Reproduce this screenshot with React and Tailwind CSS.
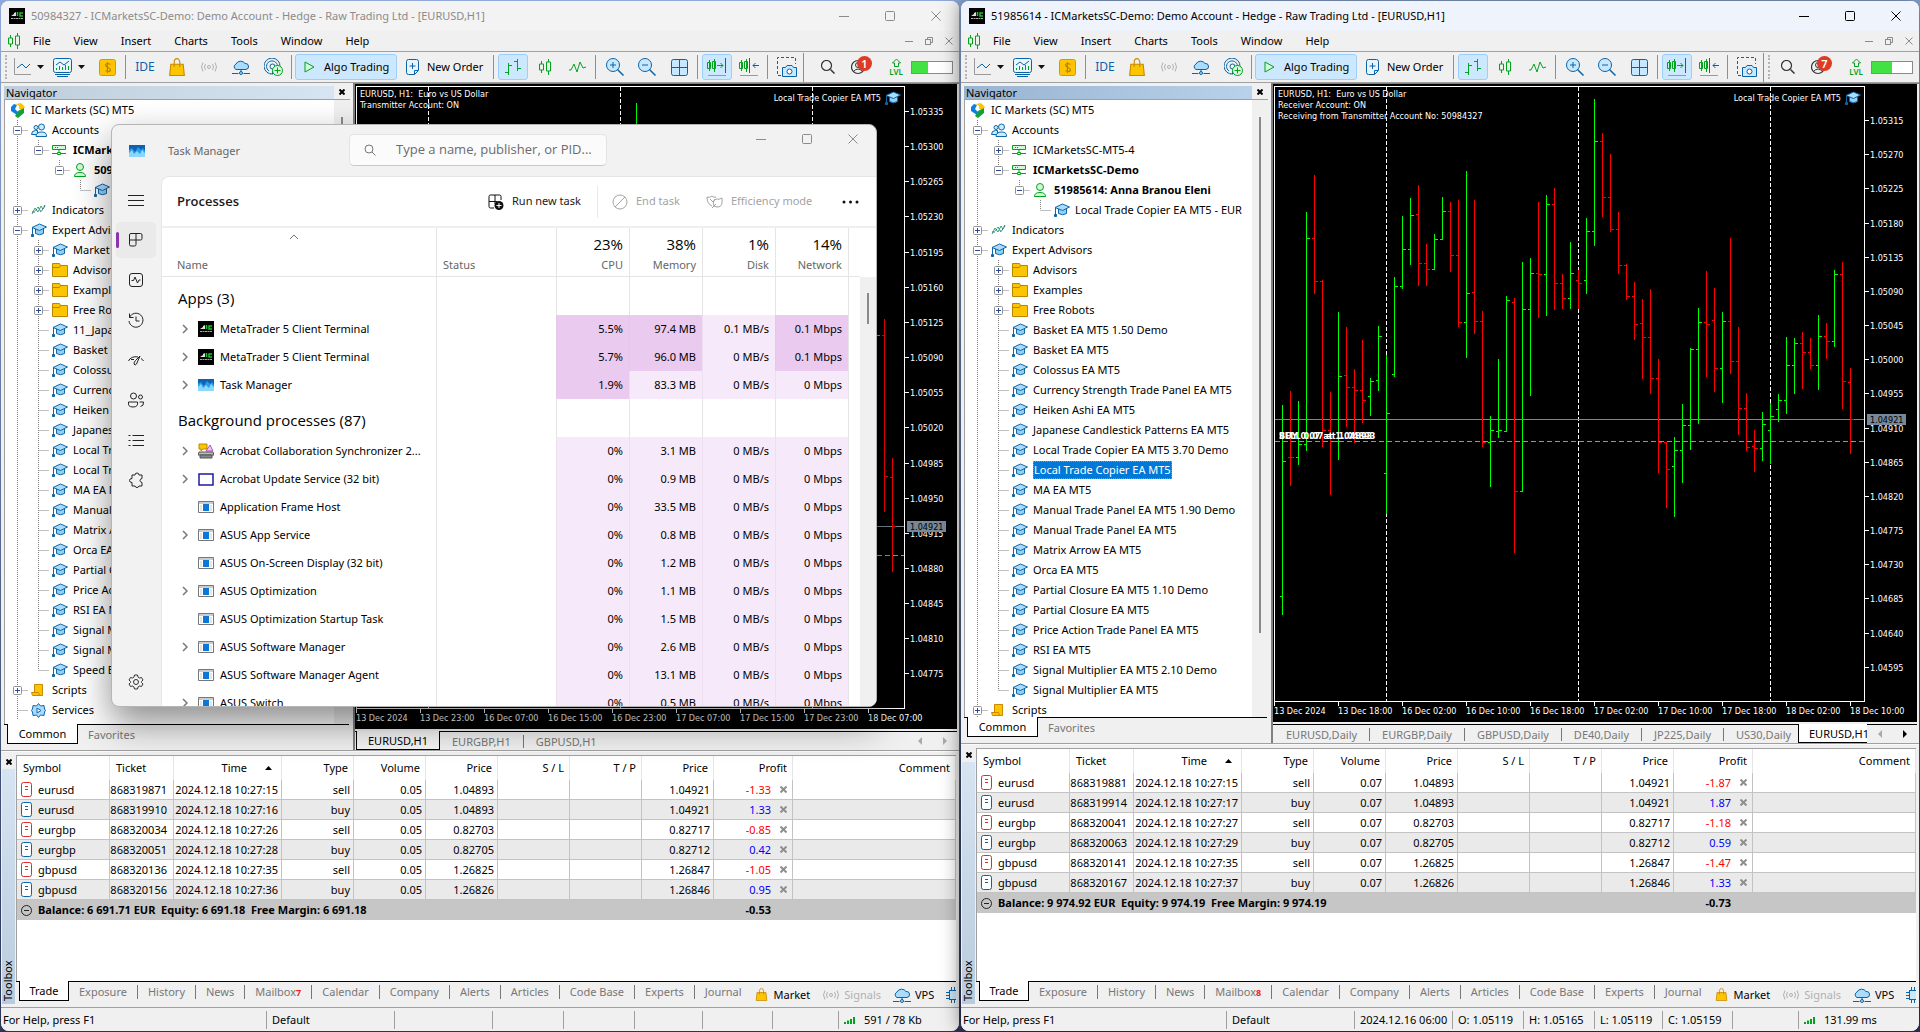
import React from 'react';

const UP = '#00ff00';
const DOWN = '#ff0000';

// [high, low, open, close, up], three steps per pixel from the top of the chart
const bars = [
    [975, 1605, 1549, 1143, 1], [933, 1217, 1132, 1132, 0], [963, 1154, 1132, 1093, 1],
    [396, 1112, 1093, 475, 1], [285, 641, 475, 604, 0], [600, 1100, 604, 1051, 0],
    [936, 1244, 1051, 1084, 0], [696, 1139, 1084, 889, 1], [741, 1040, 886, 922, 0],
    [867, 1088, 922, 931, 0], [780, 1028, 931, 961, 0], [894, 1007, 948, 904, 1],
    [738, 932, 901, 769, 1], [825, 1302, 1180, 1000, 1], [591, 892, 883, 619, 1],
    [408, 628, 619, 508, 1], [354, 554, 508, 406, 1], [315, 617, 403, 550, 0],
    [492, 617, 550, 568, 0], [462, 568, 568, 478, 1], [351, 480, 478, 394, 1],
    [366, 575, 394, 526, 0], [360, 740, 526, 727, 0], [273, 833, 727, 640, 1],
    [360, 761, 637, 724, 0], [693, 1100, 724, 1087, 0], [1008, 1220, 1087, 1051, 1],
    [837, 1073, 1054, 1051, 1], [648, 1056, 1054, 661, 1], [654, 1418, 667, 1234, 0],
    [546, 1236, 1234, 688, 1], [534, 947, 688, 580, 1], [366, 713, 580, 583, 0],
    [345, 708, 583, 373, 1], [324, 689, 373, 610, 0], [582, 686, 610, 655, 0],
    [486, 686, 655, 580, 1], [570, 686, 601, 610, 0], [414, 641, 601, 454, 1],
    [57, 497, 454, 184, 1], [159, 410, 184, 352, 0], [222, 455, 352, 448, 0],
    [396, 581, 448, 556, 0], [552, 659, 556, 649, 0], [606, 779, 649, 733, 0],
    [657, 896, 730, 772, 0], [627, 941, 772, 895, 0], [837, 1178, 895, 1087, 0],
    [1085, 1283, 1087, 1168, 0], [1071, 1310, 1159, 1111, 1], [972, 1208, 1111, 1036, 1],
    [804, 1109, 1036, 808, 1], [684, 1032, 808, 727, 1], [573, 890, 727, 733, 0],
    [624, 935, 721, 865, 0], [696, 968, 865, 724, 1], [474, 881, 724, 844, 0],
    [741, 1065, 844, 985, 0], [939, 1112, 985, 1102, 0], [1050, 1175, 1099, 1105, 0],
    [996, 1142, 1105, 1033, 1], [969, 1151, 1051, 1009, 1], [942, 1025, 988, 961, 1],
    [771, 1001, 961, 856, 1], [774, 941, 856, 790, 1], [756, 926, 790, 817, 0],
    [774, 866, 817, 856, 0], [705, 929, 856, 769, 1], [729, 836, 769, 784, 0],
    [570, 800, 784, 583, 1], [546, 986, 583, 904, 0], [864, 1121, 907, 1018, 0],
].map(([high, low, open, close, up], i) => ({ x: 9 + i * 8, high, low, open, close, up }));

const leftBars = [
    { x: 281, high: 69, low: 700, open: 500, close: 300, up: 1 },
    { x: 521, high: 747, low: 1053, open: 1000, close: 765, up: 1 },
    { x: 529, high: 717, low: 1295, open: 765, close: 1189, up: 0 },
    { x: 537, high: 1134, low: 1476, open: 1192, close: 1338, up: 0 },
];

const experts = [
    'Basket EA MT5 1.50 Demo', 'Basket EA MT5', 'Colossus EA MT5', 'Currency Strength Trade Panel EA MT5',
    'Heiken Ashi EA MT5', 'Japanese Candlestick Patterns EA MT5', 'Local Trade Copier EA MT5 3.70 Demo',
    'Local Trade Copier EA MT5', 'MA EA MT5', 'Manual Trade Panel EA MT5 1.90 Demo', 'Manual Trade Panel EA MT5',
    'Matrix Arrow EA MT5', 'Orca EA MT5', 'Partial Closure EA MT5 1.10 Demo', 'Partial Closure EA MT5',
    'Price Action Trade Panel EA MT5', 'RSI EA MT5', 'Signal Multiplier EA MT5 2.10 Demo', 'Signal Multiplier EA MT5',
];

const leftExperts = [
    '11_Japanese Patterns', 'Basket EA MT5', 'Colossus EA MT5', 'Currency Strength EA', 'Heiken Ashi EA MT5',
    'Japanese Patterns', 'Local Trade Copier', 'Local Trade Copier', 'MA EA MT5', 'Manual Trade Panel',
    'Matrix Arrow EA MT5', 'Orca EA MT5', 'Partial Closure EA', 'Price Action Panel', 'RSI EA MT5',
    'Signal Multiplier', 'Signal Multiplier',
];

// lines: one letter per indent cell. i = line, t = branch, l = last branch, p/m = expander, e/n = last expander, . = empty
const rightTree = [
    { lines: '', icon: 'logo', text: 'IC Markets (SC) MT5' },
    { lines: 'm', icon: 'users', text: 'Accounts' },
    { lines: 'ip', icon: 'server', text: 'ICMarketsSC-MT5-4' },
    { lines: 'in', icon: 'server', text: 'ICMarketsSC-Demo', bold: true },
    { lines: 'i.n', icon: 'user', text: '51985614: Anna Branou Eleni', bold: true },
    { lines: 'i..l', icon: 'cap', text: 'Local Trade Copier EA MT5 - EUR' },
    { lines: 'p', icon: 'indicator', text: 'Indicators' },
    { lines: 'm', icon: 'cap', text: 'Expert Advisors' },
    { lines: 'ip', icon: 'folder', text: 'Advisors' },
    { lines: 'ip', icon: 'folder', text: 'Examples' },
    { lines: 'ip', icon: 'folder', text: 'Free Robots' },
    ...experts.map((text, i) => ({
        lines: i === experts.length - 1 ? 'il' : 'it',
        icon: 'cap',
        text,
        selected: text === 'Local Trade Copier EA MT5',
    })),
    { lines: 'p', icon: 'script', text: 'Scripts' },
];

const leftTree = [
    { lines: '', icon: 'logo', text: 'IC Markets (SC) MT5' },
    { lines: 'm', icon: 'users', text: 'Accounts' },
    { lines: 'in', icon: 'server', text: 'ICMarketsSC-Demo', bold: true },
    { lines: 'i.n', icon: 'user', text: '50984327', bold: true },
    { lines: 'i..l', icon: 'cap', text: 'Local Trade Copier' },
    { lines: 'p', icon: 'indicator', text: 'Indicators' },
    { lines: 'm', icon: 'cap', text: 'Expert Advisors' },
    { lines: 'ip', icon: 'cap', text: 'Market' },
    { lines: 'ip', icon: 'folder', text: 'Advisors' },
    { lines: 'ip', icon: 'folder', text: 'Examples' },
    { lines: 'ip', icon: 'folder', text: 'Free Robots' },
    ...leftExperts.map((text) => ({ lines: 'it', icon: 'cap', text })),
    { lines: 'il', icon: 'cap', text: 'Speed EA MT5' },
    { lines: 'p', icon: 'script', text: 'Scripts' },
    { lines: 't', icon: 'gear', text: 'Services' },
];

const leftTerminal = {
    title: '50984327 - ICMarketsSC-Demo: Demo Account - Hedge - Raw Trading Ltd - [EURUSD,H1]',
    active: false,
    tree: leftTree,
    notices: 1,
    charge: 16,
    balance: 'Balance: 6 691.71 EUR  Equity: 6 691.18  Free Margin: 6 691.18',
    total: '-0.53',
    mail: 7,
    status: ['', '', '', '', '', ''],
    traffic: '591 / 78 Kb',
    chart: {
        lines: ['EURUSD, H1:  Euro vs US Dollar', 'Transmitter Account: ON'],
        bars: leftBars,
        axisX: 549,
        bottom: 624,
        first: 5335,
        step: 35,
        firstY: 27,
        stepY: 35.15,
        days: [73, 265, 457],
        priceY: 442,
        orderY: 471,
        times: ['13 Dec 2024', '13 Dec 23:00', '16 Dec 07:00', '16 Dec 15:00', '16 Dec 23:00', '17 Dec 07:00', '17 Dec 15:00', '17 Dec 23:00', '18 Dec 07:00'],
    },
    trades: [
        ['eurusd', '868319871', '2024.12.18 10:27:15', 'sell', '0.05', '1.04893', '1.04921', '-1.33'],
        ['eurusd', '868319910', '2024.12.18 10:27:16', 'buy', '0.05', '1.04893', '1.04921', '1.33'],
        ['eurgbp', '868320034', '2024.12.18 10:27:26', 'sell', '0.05', '0.82703', '0.82717', '-0.85'],
        ['eurgbp', '868320051', '2024.12.18 10:27:28', 'buy', '0.05', '0.82705', '0.82712', '0.42'],
        ['gbpusd', '868320136', '2024.12.18 10:27:35', 'sell', '0.05', '1.26825', '1.26847', '-1.05'],
        ['gbpusd', '868320156', '2024.12.18 10:27:36', 'buy', '0.05', '1.26826', '1.26846', '0.95'],
    ],
};

const rightTerminal = {
    title: '51985614 - ICMarketsSC-Demo: Demo Account - Hedge - Raw Trading Ltd - [EURUSD,H1]',
    active: true,
    tree: rightTree,
    notices: 7,
    charge: 20,
    balance: 'Balance: 9 974.92 EUR  Equity: 9 974.19  Free Margin: 9 974.19',
    total: '-0.73',
    mail: 8,
    status: ['2024.12.16 06:00', 'O: 1.05119', 'H: 1.05165', 'L: 1.05119', 'C: 1.05159', ''],
    traffic: '131.99 ms',
    chart: {
        lines: ['EURUSD, H1:  Euro vs US Dollar', 'Receiver Account: ON', 'Receiving from Transmitter Account No: 50984327'],
        bars,
        axisX: 591,
        bottom: 617,
        first: 5315,
        step: 45,
        firstY: 36,
        stepY: 34.17,
        days: [113, 305, 497],
        priceY: 335,
        orderY: 357,
        orders: ['BUY 0.07 at 1.04893', 'SELL 0.07 at 1.04893'],
        times: ['13 Dec 2024', '13 Dec 18:00', '16 Dec 02:00', '16 Dec 10:00', '16 Dec 18:00', '17 Dec 02:00', '17 Dec 10:00', '17 Dec 18:00', '18 Dec 02:00', '18 Dec 10:00'],
    },
    trades: [
        ['eurusd', '868319881', '2024.12.18 10:27:15', 'sell', '0.07', '1.04893', '1.04921', '-1.87'],
        ['eurusd', '868319914', '2024.12.18 10:27:17', 'buy', '0.07', '1.04893', '1.04921', '1.87'],
        ['eurgbp', '868320041', '2024.12.18 10:27:27', 'sell', '0.07', '0.82703', '0.82717', '-1.18'],
        ['eurgbp', '868320063', '2024.12.18 10:27:29', 'buy', '0.07', '0.82705', '0.82712', '0.59'],
        ['gbpusd', '868320141', '2024.12.18 10:27:35', 'sell', '0.07', '1.26825', '1.26847', '-1.47'],
        ['gbpusd', '868320167', '2024.12.18 10:27:37', 'buy', '0.07', '1.26826', '1.26846', '1.33'],
    ],
};

const apps = [
    { name: 'MetaTrader 5 Client Terminal', icon: 'ic', open: true, values: ['5.5%', '97.4 MB', '0.1 MB/s', '0.1 Mbps'], heat: [1, 1, 0, 1] },
    { name: 'MetaTrader 5 Client Terminal', icon: 'ic', open: true, values: ['5.7%', '96.0 MB', '0 MB/s', '0.1 Mbps'], heat: [1, 1, 0, 1] },
    { name: 'Task Manager', icon: 'tm', open: true, values: ['1.9%', '83.3 MB', '0 MB/s', '0 Mbps'], heat: [1, 0, 0, 0] },
];

const background = [
    ['Acrobat Collaboration Synchronizer 2...', '3.1 MB', 'sync', true],
    ['Acrobat Update Service (32 bit)', '0.9 MB', 'blank', true],
    ['Application Frame Host', '33.5 MB', 'app', false],
    ['ASUS App Service', '0.8 MB', 'app', true],
    ['ASUS On-Screen Display (32 bit)', '1.2 MB', 'app', false],
    ['ASUS Optimization', '1.1 MB', 'app', true],
    ['ASUS Optimization Startup Task', '1.5 MB', 'app', false],
    ['ASUS Software Manager', '2.6 MB', 'app', true],
    ['ASUS Software Manager Agent', '13.1 MB', 'app', false],
    ['ASUS Switch', '0.5 MB', 'app', true],
].map(([name, memory, icon, open]) => ({ name, icon, open, values: ['0%', memory, '0 MB/s', '0 Mbps'], heat: [0, 0, 0, 0] }));

const Svg = ({ w = 18, h = 18, color = 'none', children }) => (
    <svg width={w} height={h} viewBox={`0 0 ${w} ${h}`} fill="none" stroke={color} className="shrink-0" aria-hidden="true">
        {children}
    </svg>
);

const IcLogo = () => (
    <Svg w={16} h={16}>
        <rect width="16" height="16" fill="#000" />
        <path d="M2 8l3-2v2zM5 8V5l2-1v4z" fill="#ddd" />
        <path d="M8.500 4v4M14 5h-3v3h3" stroke="#19c52b" strokeWidth="1.500" />
        <path d="M2 10.500h12" stroke="#aaa" strokeDasharray="2 .5" />
    </Svg>
);

const TaskLogo = () => (
    <Svg w={16} h={12}>
        <rect width="16" height="12" fill="#0d62b4" />
        <path d="M0 5l3-2 3 4 3-5 3 3 2-2 2 3v6H0z" fill="#2b9be8" />
        <path d="M0 8l3-3 2 4 3-3 3 3 2-4 3 3v4H0z" fill="#8ad7fb" />
    </Svg>
);

const Candles = () => (
    <Svg w={14} h={16} color="#00a31b">
        <path d="M3.500 2v3M3.500 11v3M10.500 0v3M10.500 12v4" />
        <path d="M1.500 5h4v6h-4zM8.500 3h4v9h-4z" />
    </Svg>
);

const Bag = ({ size = 16 }) => (
    <svg width={size} height={size} viewBox="0 0 16 16" className="shrink-0" fill="none" aria-hidden="true">
        <path d="M2.500 5.500h11l1 10h-13z" fill="#fdc500" stroke="#c98a00" />
        <path d="M5.500 8V4a2.500 3.500 0 0 1 5 0v4" stroke="#c98a00" />
    </svg>
);

const Signal = ({ color = '#b0b0b0' }) => (
    <Svg w={18} h={14} color={color}>
        <circle cx="9" cy="7" r="1.500" />
        <path d="M5.500 4q-2 3 0 6M3 2.500q-3 4.500 0 9M12.500 4q2 3 0 6M15 2.500q3 4.500 0 9" />
    </Svg>
);

const Cloud = () => (
    <Svg w={18} h={16} color="#0b63a5">
        <path d="M4 10.500a3 3 0 0 1 0-5.500 5 4.500 0 0 1 9-.5 3 3 0 0 1 1 6z" fill="#a9dcff" />
        <path d="M9 10.500v3M0 14.500h6.500M11.500 14.500H18" />
        <circle cx="9" cy="14" r="1.500" fill="#a9dcff" />
    </Svg>
);

const Cap = () => (
    <Svg w={16} h={14} color="#0f66a6">
        <path d="M4.500 6v4.500q4 2.500 8 0V6" fill="#8fd0f7" />
        <path d="M1 4.500L8.500 1 15.500 4 8.500 7.500z" fill="#a9dcff" />
        <path d="M1.500 5v6" />
        <path d="M.5 11.500h2v2h-2z" fill="#0f66a6" />
    </Svg>
);

const treeIcons = {
    logo: (
        <Svg w={15} h={15}>
            <path d="M4 1l3 1-2 4 3 3-1 3-6-4 0-4z" fill="#0e7fe0" />
            <path d="M6 1l5-1 4 4-3 3-3-1V3z" fill="#fdc500" />
            <path d="M8 8l6-3v5l-6 5-3-2z" fill="#12a03c" />
        </Svg>
    ),
    users: (
        <Svg w={16} h={14} color="#0f66a6">
            <circle cx="5" cy="4.500" r="2" fill="#cdeaff" />
            <path d="M.5 11.500q0-4 4-4h2v4z" fill="#cdeaff" />
            <circle cx="10.500" cy="4" r="3" fill="#cdeaff" />
            <path d="M5 13.500q0-4.500 5.500-4.500t5 4.500z" fill="#cdeaff" />
        </Svg>
    ),
    server: (
        <Svg w={14} h={12} color="#00a31b">
            <path d="M.5 1.500h13v4H.5z" fill="#d5f7d9" />
            <path d="M3 3.500h1M5 3.500h1M7 5.500v3M0 9.500h5M9 9.500h5M5.500 8.500h3v2h-3z" />
        </Svg>
    ),
    user: (
        <Svg w={14} h={14} color="#00a31b">
            <circle cx="7" cy="4" r="3.500" fill="#d5f7d9" />
            <path d="M1.500 13.500q0-4 5.500-4t5.500 4z" fill="#d5f7d9" />
        </Svg>
    ),
    cap: <Cap />,
    indicator: (
        <Svg w={15} h={12}>
            <path d="M1 10l3-6 3 4 3-6 2 3 2-3" stroke="#2fae4a" />
            <path d="M1 8l3 0 3-5 3 5 4-7" stroke="#2f6ca6" strokeDasharray="3 1" />
        </Svg>
    ),
    folder: (
        <Svg w={16} h={14} color="#b98600">
            <path d="M.5 3V.5h7l1 2h7v11H.5z" fill="#fdc500" />
            <path d="M.5 4.500h7l1-2" />
        </Svg>
    ),
    script: (
        <Svg w={14} h={12} color="#c98a00">
            <path d="M3.500.5h8v11h-8z" fill="#fdc500" />
            <path d="M.5 8.500h7l1 3h-7z" fill="#fdc500" />
        </Svg>
    ),
    gear: (
        <Svg w={15} h={15} color="#0f66a6">
            <path d="M7.500.5l2 2.500 3.500-.5.5 3.500 1 1.500-1 1.500-.5 3.500-3.500-.5-2 2.500-2-2.500-3.500.5L1.500 9l-1-1.500 1-1.500L2 2.500l3.500.5z" fill="#a9dcff" />
            <path d="M6 5l4 2.500L6 10z" fill="#fff" />
        </Svg>
    ),
};

const processIcons = {
    ic: <IcLogo />,
    tm: <TaskLogo />,
    sync: (
        <Svg w={16} h={16}>
            <path d="M1 1h8v5H5L3 8V6H1z" fill="#ffc400" stroke="#b48900" />
            <path d="M8 8l4-6 3 6z" fill="#efc7f5" stroke="#b050c0" />
            <path d="M1 9h14l1 3H0z" fill="#bbb" stroke="#555" />
            <path d="M2 12h12v3H2z" fill="#888" stroke="#555" />
        </Svg>
    ),
    blank: (
        <Svg w={16} h={13}>
            <path d="M1 1h14v11H1z" fill="#fff" stroke="#1c1c9c" strokeWidth="1.500" />
        </Svg>
    ),
    app: (
        <Svg w={16} h={12}>
            <path d="M.5.5h15v11H.5z" fill="#fff" stroke="#777" />
            <path d="M1 2h14" stroke="#999" />
            <path d="M2.500 5h1M2.500 7h1M2.500 9h1M12.500 5h1M12.500 7h1M12.500 9h1" stroke="#999" />
            <path d="M5 3h6v7H5z" fill="#0a78d4" />
        </Svg>
    ),
};

const CloseX = ({ size = 8, color = '#000', width = 1 }) => (
    <Svg w={size} h={size} color={color}>
        <path d={`M.5 .5L${size - 0.5} ${size - 0.5}M${size - 0.5} .5L.5 ${size - 0.5}`} strokeWidth={width} />
    </Svg>
);

const WindowButtons = ({ color }) => (
    <div className="flex">
        <button aria-label="Minimize" className="flex h-7 w-[46px] items-center justify-center">
            <Svg w={10} h={10} color={color}><path d="M0 5.500h10" /></Svg>
        </button>
        <button aria-label="Maximize" className="flex h-7 w-[46px] items-center justify-center">
            <Svg w={10} h={10} color={color}><rect x=".5" y=".5" width="9" height="9" rx="1" /></Svg>
        </button>
        <button aria-label="Close" className="flex h-7 w-[46px] items-center justify-center">
            <CloseX size={10} color={color} />
        </button>
    </div>
);

const Sep = () => <span className="ml-0.5 mr-[3px] h-6 w-px shrink-0 bg-[#8f8f8f]" />;

const Tool = ({ label, on, children }) => (
    <button
        aria-label={label}
        className={on
            ? 'mx-px flex h-[26px] w-[30px] shrink-0 items-center justify-center rounded-[3px] border border-[#99cfff] bg-[#cce8ff]'
            : 'flex h-[26px] w-8 shrink-0 items-center justify-center'}
    >
        {children}
    </button>
);

const Caret = () => (
    <Svg w={7} h={4}><path d="M0 0h7L3.500 4z" fill="#111" /></Svg>
);

const Toolbar = ({ data }) => (
    <div className="flex h-[31px] shrink-0 items-center overflow-hidden border-b border-[#a0a0a0] bg-[#f0f0f0]">
        <span className="mx-[2px] h-6 w-1 shrink-0 border-r-2 border-dotted border-[#b4b4b4]" />
        <button aria-label="Chart type" className="flex h-[26px] w-[40px] shrink-0 items-center gap-[6px] pl-[4px]">
            <Svg w={18} h={18}>
                <path d="M1.500 0v16.500H18" stroke="#9a9a9a" />
                <path d="M4 10l5-4 4 4 4-4" stroke="#0b63a5" />
            </Svg>
            <Caret />
        </button>
        <button aria-label="Indicators" className="flex h-[26px] w-[42px] shrink-0 items-center gap-[6px] pl-[4px]">
            <Svg w={19} h={20} color="#0b63a5">
                <rect x=".5" y="1.500" width="18" height="14" rx="2" fill="#e8f5ff" />
                <path d="M3 8l4-3 4 3 5-4" />
                <path d="M3.500 11v2M6.500 9v4M9.500 10v3M12.500 8v5M15.500 9v4" stroke="#00a31b" />
                <path d="M2 17.500h15M4 19.500h11" />
            </Svg>
            <Caret />
        </button>
        <Tool label="Quotes">
            <Svg w={17} h={17}>
                <rect x=".5" y=".5" width="16" height="16" rx="2" fill="#fdc500" stroke="#d59a00" />
                <path d="M11.500 5.500q-3-2-5 0 0 2 2.500 3t2.500 3q-2 2-5 0M8.500 3v11" stroke="#c07f00" strokeWidth="1.200" />
            </Svg>
        </Tool>
        <Sep />
        <button className="h-[26px] w-8 shrink-0 text-[12px] text-[#0b63a5]">IDE</button>
        <Tool label="Market"><Bag size={18} /></Tool>
        <Tool label="Signals"><Signal /></Tool>
        <Tool label="Virtual hosting"><Cloud /></Tool>
        <Tool label="Account">
            <Svg w={19} h={18} color="#0b63a5">
                <path d="M9 16A8 8 0 1 1 16 8.500M5 13A5.500 5.500 0 1 1 13.500 8" />
                <circle cx="8.500" cy="8.500" r="2.500" />
                <path d="M8.500 11v5" />
                <circle cx="13.500" cy="12.500" r="5" fill="#dff7e2" stroke="#00a31b" />
                <path d="M13.500 9.500v6M10.500 12.500h6" stroke="#00a31b" />
            </Svg>
        </Tool>
        <Sep />
        <button className="flex h-[26px] w-[102px] shrink-0 items-center gap-[9px] rounded-[3px] border border-[#99cfff] bg-[#cce8ff] pl-2">
            <Svg w={11} h={12} color="#00a31b"><path d="M1 1l9 5-9 5z" fill="#d5f7d9" /></Svg>
            <span className="whitespace-nowrap">Algo Trading</span>
        </button>
        <button className="flex h-[26px] w-[94px] shrink-0 items-center gap-2 pl-[9px]">
            <Svg w={13} h={16} color="#0b63a5">
                <path d="M2.500.5h8a2 2 0 0 1 2 2v9l-4 4h-6a2 2 0 0 1-2-2v-11a2 2 0 0 1 2-2z" fill="#e8f5ff" />
                <path d="M6.500 4v6M3.500 7h6M12 11.500H8.500v4" />
            </Svg>
            <span className="whitespace-nowrap">New Order</span>
        </button>
        <Sep />
        <Tool label="Bar chart" on>
            <Svg w={18} h={18} color="#00a31b"><path d="M4.500 5v12M1 14.500h3.500M4.500 7.500H8M13.500 1v12M10 3.500h3.500M13.500 10.500H17" /></Svg>
        </Tool>
        <Tool label="Candlesticks"><Candles /></Tool>
        <Tool label="Line chart">
            <Svg w={17} h={14} color="#00a31b"><path d="M0 10h2l3-6 3 8 3-10 3 6 3-1" /></Svg>
        </Tool>
        <Sep />
        <Tool label="Zoom in">
            <Svg w={18} h={18} color="#0b63a5">
                <circle cx="7" cy="7" r="6.500" fill="#c7e8ff" /><path d="M11.500 11.500l6 6" strokeWidth="1.500" /><path d="M7 4v6M4 7h6" />
            </Svg>
        </Tool>
        <Tool label="Zoom out">
            <Svg w={18} h={18} color="#0b63a5">
                <circle cx="7" cy="7" r="6.500" fill="#c7e8ff" /><path d="M11.500 11.500l6 6" strokeWidth="1.500" /><path d="M4 7h6" />
            </Svg>
        </Tool>
        <Tool label="Tile windows">
            <Svg w={17} h={17} color="#0b63a5">
                <rect x=".5" y=".5" width="16" height="16" rx="2" fill="#c7e8ff" /><path d="M8.500 0v17M0 8.500h17" />
            </Svg>
        </Tool>
        <Sep />
        <Tool label="Auto scroll" on>
            <Svg w={20} h={18} color="#00a31b">
                <path d="M2.500 2v11M.5 4.500h3v6h-3zM7.500 1v13M5.500 3.500h3v7h-3z" />
                <path d="M10 7.500h6M13.500 5l2.500 2.500-2.500 2.500" />
                <path d="M18.500 0v15" stroke="#0b63a5" /><path d="M1 17.500h18" stroke="#999" />
            </Svg>
        </Tool>
        <Tool label="Chart shift">
            <Svg w={20} h={18} color="#00a31b">
                <path d="M2.500 2v11M.5 4.500h3v6h-3zM7.500 1v13M5.500 3.500h3v7h-3z" />
                <path d="M10.500 0v15M20 7.500h-6M16.500 5L14 7.500l2.500 2.500" stroke="#0b63a5" />
                <path d="M1 17.500h18" stroke="#999" />
            </Svg>
        </Tool>
        <Sep />
        <Tool label="Screenshot">
            <Svg w={20} h={20} color="#0b63a5">
                <path d="M4 18.500H.5V.5h18V7" strokeDasharray="3 2" />
                <path d="M5.500 10.500h3l1.500-2h5l1.500 2h3v9h-14z" fill="#c7e8ff" />
                <circle cx="12.500" cy="14.500" r="2.500" fill="#fff" />
            </Svg>
        </Tool>
        <span className="h-[29px] w-px shrink-0 bg-[#8f8f8f]" />
        <span className={data.active
            ? 'mx-[2px] h-6 w-1 shrink-0 border-r-2 border-dotted border-[#b4b4b4]'
            : 'mx-[2px] h-6 w-1 shrink-0'} />
        <Tool label="Search">
            <Svg w={14} h={14} color="#333"><circle cx="5.500" cy="5.500" r="5" strokeWidth="1.200" /><path d="M9.500 9.500l4 4" strokeWidth="1.500" /></Svg>
        </Tool>
        <button aria-label="Notifications" className="relative ml-[7px] h-[26px] w-[30px] shrink-0">
            <Svg w={14} h={26} color="#333">
                <circle cx="7" cy="13" r="6.500" strokeWidth="1.200" /><circle cx="7" cy="11" r="2.500" /><path d="M2.500 17.500q4.500-5 9 0" />
            </Svg>
            <span className="absolute left-[6px] top-[2px] h-[15px] w-[15px] rounded-full bg-[#e03a24] text-center text-[11px] font-semibold leading-[15px] text-white">
                {data.notices}
            </span>
        </button>
        <div className="flex w-[30px] shrink-0 flex-col items-center text-[#00a31b]">
            <Svg w={9} h={8} color="#00a31b"><path d="M4.500 0l4 4h-2v3.500h-4V4h-2z" /></Svg>
            <span className="text-[8px] font-semibold leading-[9px]">LVL</span>
        </div>
        <div className="h-[13px] w-[42px] shrink-0 border border-[#8a8a8a] bg-white">
            <div className="h-full bg-[#41e241]" style={{ width: data.charge }} />
        </div>
    </div>
);

const TreeCell = ({ kind }) => {
    const vertical = { i: 'M10.500 0V20', t: 'M10.500 0V20', p: 'M10.500 0V20', m: 'M10.500 0V20', l: 'M10.500 0V10', n: 'M10.500 0V10' }[kind];
    const box = kind === 'p' || kind === 'm' || kind === 'n';
    return (
        <Svg w={21} h={20} color="#808080">
            {vertical && <path d={vertical} strokeDasharray="1 1" />}
            {kind !== 'i' && kind !== '.' && <path d="M10.500 10.500H21" strokeDasharray="1 1" />}
            {box && <rect x="6.500" y="6.500" width="8" height="8" rx="1" fill="#fff" stroke="#919191" />}
            {box && <path d={kind === 'p' ? 'M8 10.500h5M10.500 8v5' : 'M8 10.500h5'} stroke="#2b4a9c" />}
        </Svg>
    );
};

const Navigator = ({ data }) => (
    <section className={data.active ? 'flex w-[310px] shrink-0 flex-col' : 'flex w-[352px] shrink-0 flex-col'}>
        <div className="ml-[3px] mt-0.5 flex h-[14px] shrink-0 items-center pr-[3px]">
            <h2 className={data.active
                ? 'flex-1 bg-gradient-to-r from-[#99b4d1] to-[#b9d1ea] pl-[2px] leading-[13px]'
                : 'flex-1 bg-gradient-to-r from-[#bfcddb] to-[#d7e4f2] pl-[2px] leading-[13px]'}
            >
                Navigator
            </h2>
            <button aria-label="Close navigator" className="flex w-4 justify-center"><CloseX size={6} width={2} /></button>
        </div>
        <div className="ml-[3px] mr-[3px] flex min-h-0 flex-1 border-l border-t border-[#a0a0a0] bg-white">
            <ul className="mr-[2px] min-w-0 flex-1 overflow-hidden">
                {data.tree.map((row, i) => (
                    <li key={i} className="flex h-5 items-center pl-[2px]">
                        {row.lines.split('').map((kind, c) => <TreeCell key={c} kind={kind} />)}
                        <span className="flex w-6 shrink-0 pl-[3px]">{treeIcons[row.icon]}</span>
                        <span className={`whitespace-nowrap ${row.bold ? 'font-bold' : ''} ${row.selected ? 'h-[18px] border border-dotted border-[#e08030] bg-[#0078d7] leading-4 text-white' : ''}`}>
                            {row.text}
                        </span>
                    </li>
                ))}
            </ul>
            <div className="flex w-4 shrink-0 justify-center bg-[#f0f0f0] pt-[17px]">
                <div className="h-[516px] w-0.5 bg-[#8a8a8a]" />
            </div>
        </div>
        <div className="mb-[3px] ml-[3px] mr-[4px] flex h-[23px] shrink-0 items-start">
            <span className="h-px w-[3px] bg-black" />
            <button className="h-5 w-[71px] border-x border-b border-black bg-white leading-[19px]">Common</button>
            <button className="h-5 flex-1 border-t border-black pl-[10px] text-left leading-[19px] text-[#777]">Favorites</button>
        </div>
    </section>
);

const Chart = ({ chart }) => {
    const right = chart.axisX;
    const px = (v) => Math.round(v / 3) - 4;
    return (
        <svg className="block min-h-0 w-full flex-1 bg-black font-['DejaVu_Sans_Condensed','Open_Sans',sans-serif] text-[9px]" fill="#fff" shapeRendering="crispEdges" aria-label="EURUSD H1 chart">
            {chart.days.map((x) => (
                <path key={x} d={`M${x + 0.5} 3V${chart.bottom}`} stroke="#fff" strokeDasharray="4 2" />
            ))}
            <path d={`M2 ${chart.priceY + 0.5}H${right}`} stroke="#778899" />
            {chart.bars.map((bar) => {
                const x = bar.x + 0.5;
                return (
                    <path
                        key={bar.x}
                        d={`M${x} ${px(bar.high)}V${px(bar.low)}M${x - 3} ${px(bar.open) + 0.5}H${x}M${x} ${px(bar.close) + 0.5}H${x + 3}`}
                        stroke={bar.up ? UP : DOWN}
                    />
                );
            })}
            <path d={`M2 ${chart.orderY + 0.5}H${right}`} stroke={UP} strokeDasharray="5 3" />
            <path d={`M1.500 ${chart.bottom}V2.500H${right + 0.5}V${chart.bottom + 0.5}H1`} fill="none" stroke="#fff" />
            {chart.lines.map((line, i) => (
                <text key={line} x="5" y={13 + i * 11} xmlSpace="preserve">{line}</text>
            ))}
            {(chart.orders || []).map((order) => (
                <text key={order} x="6" y={chart.orderY - 2} fontWeight="600">{order}</text>
            ))}
            <text x={right - 23} y="17" textAnchor="end">Local Trade Copier EA MT5</text>
            <svg x={right - 19} y="7" width="16" height="14" fill="none" stroke="#0f66a6" shapeRendering="auto">
                <path d="M4.500 6v4.500q4 2.500 8 0V6" fill="#8fd0f7" />
                <path d="M1 4.500L8.500 1 15.500 4 8.500 7.500z" fill="#a9dcff" />
                <path d="M1.500 5v6" />
                <path d="M.5 11.500h2v2h-2z" fill="#0f66a6" />
            </svg>
            {Array.from({ length: 17 }, (_, k) => {
                const y = Math.round(chart.firstY + k * chart.stepY);
                return (
                    <g key={k}>
                        <path d={`M${right} ${y + 0.5}h5`} stroke="#fff" />
                        <text x={right + 6} y={y + 4}>{((100000 + chart.first - k * chart.step) / 100000).toFixed(5)}</text>
                    </g>
                );
            })}
            <rect x={right + 3} y={chart.priceY - 5} width="39" height="11" fill="#778899" />
            <text x={right + 6} y={chart.priceY + 4} fill="#000">1.04921</text>
            {chart.times.map((time, i) => (
                <g key={time}>
                    <path d={`M${i * 64 + 1.5} ${chart.bottom}v5`} stroke="#fff" />
                    <text x={i * 64 + 1} y={chart.bottom + 13}>{time}</text>
                </g>
            ))}
        </svg>
    );
};

const ChartTabs = ({ active }) => {
    const daily = ['EURUSD,Daily', 'EURGBP,Daily', 'GBPUSD,Daily', 'DE40,Daily', 'JP225,Daily', 'US30,Daily'];
    const names = active ? daily : ['EURGBP,H1', 'GBPUSD,H1'];
    const current = (
        <button className={active
            ? 'h-[19px] w-[69px] shrink-0 overflow-hidden whitespace-nowrap border-b border-l border-black bg-white pl-[10px] text-left'
            : 'h-[19px] w-[84px] shrink-0 border-x border-b border-black bg-[#f5f5f5]'}
        >
            EURUSD,H1
        </button>
    );
    return (
        <div className="mt-0.5 flex h-[19px] shrink-0 leading-[19px] text-black">
            <span className={active ? 'w-px border-t border-black' : 'w-px border-t border-black'} />
            {!active && current}
            <div className="flex min-w-0 flex-1 overflow-hidden border-t border-black text-[#777]">
                {names.map((name, i) => (
                    <React.Fragment key={name}>
                        {i > 0 && <span className="mt-[3px] h-[13px] w-px shrink-0 bg-[#777]" />}
                        <button className="shrink-0 px-3 leading-[19px]">{name}</button>
                    </React.Fragment>
                ))}
            </div>
            {active && current}
            <div className="flex w-[50px] items-center justify-around border-t border-black">
                <button aria-label="Scroll tabs left"><Svg w={4} h={8}><path d="M4 0v8L0 4z" fill="#aaa" /></Svg></button>
                <button aria-label="Scroll tabs right"><Svg w={4} h={8}><path d="M0 0v8l4-4z" fill={active ? '#000' : '#aaa'} /></Svg></button>
            </div>
        </div>
    );
};

const TradeTable = ({ data }) => (
    <table className="w-full table-fixed border-separate border-spacing-0 whitespace-nowrap text-right">
        <colgroup>
            <col className="w-[93px]" />
            <col className="w-[64px]" />
            <col className="w-[108px]" />
            <col className="w-[72px]" />
            <col className="w-[72px]" />
            <col className="w-[72px]" />
            <col className="w-[72px]" />
            <col className="w-[72px]" />
            <col className="w-[72px]" />
            <col className="w-[79px]" />
            <col />
        </colgroup>
        <thead>
            <tr className="h-6 [&>th]:border-r [&>th]:border-[#e5e5e5] [&>th]:p-0 [&>th]:pr-[5px] [&>th]:font-normal">
                <th className="text-left"><span className="pl-[6px]">Symbol</span></th>
                <th className="text-left"><span className="pl-[6px]">Ticket</span></th>
                <th>
                    <span className="flex items-center justify-end gap-[18px] pr-1">
                        Time
                        <Svg w={7} h={4}><path d="M3.500 0L7 4H0z" fill="#000" /></Svg>
                    </span>
                </th>
                <th>Type</th>
                <th>Volume</th>
                <th>Price</th>
                <th>S / L</th>
                <th>T / P</th>
                <th>Price</th>
                <th>Profit</th>
                <th>Comment</th>
            </tr>
        </thead>
        <tbody>
            {data.trades.map(([symbol, ticket, time, type, volume, price, now, profit], i) => (
                <tr
                    key={ticket}
                    className={`h-5 [&>td]:border-b [&>td]:border-r [&>td]:border-[#c3c3c3] [&>td]:p-0 [&>td]:pr-[3px] [&>td]:leading-[19px] ${i % 2 ? 'bg-[#eaeaea]' : 'bg-white'}`}
                >
                    <td>
                        <span className="flex items-center gap-[6px] pl-1">
                            <Svg w={11} h={15} color={type === 'sell' ? '#d9302c' : '#0b63a5'}>
                                <rect x=".5" y=".5" width="10" height="14" rx="2" fill="#fff" />
                                <path d="M4 4.500h3M4 7.500h3" />
                            </Svg>
                            {symbol}
                        </span>
                    </td>
                    <td><span className="pr-[3px]">{ticket}</span></td>
                    <td>{time}</td>
                    <td>{type}</td>
                    <td>{volume}</td>
                    <td>{price}</td>
                    <td></td>
                    <td></td>
                    <td>{now}</td>
                    <td>
                        <span className={`flex items-center justify-end gap-[9px] pr-0.5 ${profit[0] === '-' ? 'text-[#ff0000]' : 'text-[#0000ff]'}`}>
                            {profit}
                            <button aria-label={`Close ${ticket}`}><CloseX size={7} color="#8f8f8f" width={2} /></button>
                        </span>
                    </td>
                    <td></td>
                </tr>
            ))}
            <tr className="h-5 bg-[#c6c6c6] font-bold">
                <td colSpan={9} className="p-0">
                    <span className="flex items-center gap-[6px] whitespace-pre pl-1">
                        <Svg w={11} h={11} color="#222"><circle cx="5.500" cy="5.500" r="5" /><path d="M3 5.500h5" /></Svg>
                        {data.balance}
                    </span>
                </td>
                <td className="p-0 pr-[22px]">{data.total}</td>
                <td></td>
            </tr>
        </tbody>
    </table>
);

const toolboxTabs = ['Exposure', 'History', 'News', 'Mailbox', 'Calendar', 'Company', 'Alerts', 'Articles', 'Code Base', 'Experts', 'Journal'];

const Toolbox = ({ data }) => (
    <section className={data.active ? 'flex h-[263px] shrink-0 border-t border-[#fafafa] pt-[3px]' : 'flex h-[256px] shrink-0 border-t border-[#fafafa] pt-[3px]'}>
        <div className="flex w-[15px] shrink-0 flex-col items-center pb-[3px]">
            <button aria-label="Close toolbox" className="flex h-[14px] items-center"><CloseX size={6} width={2} /></button>
            <h2 className="flex w-[13px] flex-1 rotate-180 items-center bg-gradient-to-b from-[#b9cbdd] to-[#d7e4f2] pt-[3px] [writing-mode:vertical-rl]">
                Toolbox
            </h2>
        </div>
        <div className="flex min-w-0 flex-1 flex-col pr-[3px]">
            <div className="flex-1 border-l border-t border-[#a0a0a0] bg-white">
                <TradeTable data={data} />
            </div>
            <div className="flex h-[26px] shrink-0 items-start overflow-hidden leading-[19px]">
                <span className="h-px w-[3px] shrink-0 bg-black" />
                <button className="h-5 w-[50px] shrink-0 border-x border-b border-black bg-white">Trade</button>
                <div className="flex h-[25px] min-w-0 flex-1 border-t border-black text-[#777]">
                    {toolboxTabs.map((tab, i) => (
                        <React.Fragment key={tab}>
                            {i > 0 && <span className="mt-[3px] h-[14px] w-px shrink-0 bg-[#777]" />}
                            <button className="flex h-[18px] shrink-0 items-center whitespace-nowrap px-[10px]">
                                {tab}
                                {tab === 'Mailbox' && <sub className="text-[9px] font-bold text-[#ee2222]">{data.mail}</sub>}
                            </button>
                        </React.Fragment>
                    ))}
                    <button className="ml-[3px] mt-[3px] flex h-[19px] shrink-0 items-center gap-[6px] text-black"><Bag size={13} />Market</button>
                    <button className="ml-3 mt-[3px] flex h-[19px] shrink-0 items-center gap-1 text-[#b0b0b0]"><Signal />Signals</button>
                    <button className="ml-3 mt-[3px] flex h-[19px] shrink-0 items-center gap-1 text-black"><Cloud />VPS</button>
                    <button aria-label="Strategy tester" className="ml-3 mt-[3px] flex h-[19px] shrink-0 items-center">
                        <Svg w={16} h={16} color="#0b63a5">
                            <rect x="3.500" y="3.500" width="9" height="9" fill="#c7e8ff" />
                            <path d="M5.500 0v3M8.500 0v3M11.500 0v3M5.500 13v3M8.500 13v3M11.500 13v3M0 5.500h3M0 8.500h3M0 11.500h3" />
                        </Svg>
                    </button>
                </div>
            </div>
        </div>
    </section>
);

const statusCells = ['w-[98px]', 'w-[71px]', 'w-[71px]', 'w-[68px]', 'w-[70px]', 'w-[66px]'];

const StatusBar = ({ data }) => (
    <footer className="flex h-[24px] shrink-0 items-center border-t border-[#a0a0a0] bg-[#f0f0f0] leading-[18px]">
        <span className="w-[265px] shrink-0 pl-[2px]">For Help, press F1</span>
        <span className="h-[18px] w-[128px] shrink-0 border-l border-[#a0a0a0] pl-[5px]">Default</span>
        {data.status.map((text, i) => (
            <span key={i} className={`h-[18px] shrink-0 whitespace-nowrap border-l border-[#a0a0a0] pl-[5px] ${statusCells[i]}`}>{text}</span>
        ))}
        <span className="flex h-[18px] flex-1 items-center gap-[7px] border-l border-[#a0a0a0] pl-[5px]">
            <Svg w={13} h={9} color="#00a31b">
                <path d="M1 9V7M4 9V5.500M7 9V4M10 9V2" strokeWidth="2" />
            </Svg>
            {data.traffic}
        </span>
    </footer>
);

const Terminal = ({ data }) => (
    <main className={data.active
        ? 'flex min-w-0 flex-1 flex-col overflow-hidden rounded-[8px] bg-[#f0f0f0] shadow-[0_0_20px_rgba(0,0,0,0.5)]'
        : 'flex min-w-0 flex-1 flex-col overflow-hidden rounded-[8px] bg-[#f0f0f0]'}
    >
        <header className={data.active
            ? 'flex h-[30px] shrink-0 items-center gap-[6px] bg-[#eff3fb] pl-2'
            : 'flex h-[30px] shrink-0 items-center gap-[6px] bg-[#f3f3f3] pl-2 text-[#8b8b8b]'}
        >
            <IcLogo />
            <h1 className="flex-1">{data.title}</h1>
            <WindowButtons color={data.active ? '#000' : '#8b8b8b'} />
        </header>
        <nav className="flex h-[21px] shrink-0 items-center border-b border-[#a0a0a0] bg-[#f0f0f0] pl-[6px]">
            <Candles />
            <div className="ml-3 flex flex-1 gap-[23px]">
                {['File', 'View', 'Insert', 'Charts', 'Tools', 'Window', 'Help'].map((item) => (
                    <button key={item} className="leading-[18px]">{item}</button>
                ))}
            </div>
            <div className="flex items-center gap-3 pr-[6px]">
                <button aria-label="Minimize chart"><Svg w={8} h={8} color="#8b8b8b"><path d="M0 4.500h8" /></Svg></button>
                <button aria-label="Restore chart">
                    <Svg w={8} h={8} color="#8b8b8b"><rect x=".5" y="2.500" width="5" height="5" /><path d="M2.500 2V.5h5v5H6" /></Svg>
                </button>
                <button aria-label="Close chart"><CloseX size={8} color="#8b8b8b" /></button>
            </div>
        </nav>
        <Toolbar data={data} />
        <div className="flex min-h-0 flex-1 border-b border-[#a0a0a0]">
            <Navigator data={data} />
            <div className="flex min-w-0 flex-1 flex-col border-l-2 border-t border-[#808080] pr-0.5">
                <Chart chart={data.chart} />
                <ChartTabs active={data.active} />
            </div>
        </div>
        <Toolbox data={data} />
        <StatusBar data={data} />
    </main>
);

const sideIcons = [
    ['Menu', <path d="M0 3.500h16M0 8.500h16M0 13.500h16" />],
    ['Processes', <path d="M1.500 3A1.500 1.500 0 0 1 3 1.500h9.500A1.500 1.500 0 0 1 14 3v3.500A1.500 1.500 0 0 1 12.500 8h-11M8 1.500V12.500A1.500 1.500 0 0 1 6.500 14H3a1.500 1.500 0 0 1-1.500-1.500V3" />],
    ['Performance', <><rect x="1.500" y="1.500" width="13" height="13" rx="2.500" /><path d="M3.500 8.500h2L7 5l2.500 6L11 8h1.500" /></>],
    ['App history', <><path d="M1.500 5.500A7 7 0 1 1 1 9M1.500 1.500v4h4M8 4.500V9h3.500" /></>],
    ['Startup apps', <><path d="M.5 9A7.500 6 0 0 1 10 5M13 6.500a7 6 0 0 1 2.500 2.500M3 7.500h3" /><path d="M12 4L8.500 12q-1.500 2-2.500 0 0-2 1.500-3.500z" /></>],
    ['Users', <><circle cx="5.500" cy="4" r="3" /><circle cx="12.500" cy="5" r="2" /><path d="M.5 10h9q1 5-4.500 5T.5 10zM11.500 10h4q.5 4-3 4.500" /></>],
    ['Details', <><path d="M4.500 3.500H16M4.500 8.500H16M4.500 13.500H16" /><path d="M.5 3.500h2M.5 8.500h2M.5 13.500h2" /></>],
    ['Services', <path d="M4 3h3q0-2 2-2t2 2h3v3.500q-2 .5-2 2t2 2V14h-3q-.5 1.500-2 1.500T7 14H4v-3.500Q1.500 10.500 1.500 8.500T4 6.500z" />],
];

const ProcessRow = ({ row }) => (
    <tr className="h-7 [&>td]:p-0">
        <td>
            <span className="flex items-center pl-5">
                <span className="flex w-4 shrink-0">
                    {row.open && <Svg w={6} h={10} color="#777"><path d="M1 1l4 4-4 4" strokeWidth="1.500" /></Svg>}
                </span>
                <span className="flex w-[22px] shrink-0">{processIcons[row.icon]}</span>
                <span className="whitespace-nowrap">{row.name}</span>
            </span>
        </td>
        <td className="border-l border-[#e5e5e5]"></td>
        {row.values.map((value, i) => (
            <td
                key={i}
                className={row.heat[i]
                    ? 'border-l border-[#e6c6ea] bg-[#eacaee]'
                    : 'border-l border-[#eddff0] bg-[#f6e9f9]'}
            >
                <span className="block pr-[6px] text-right">{value}</span>
            </td>
        ))}
        <td className="border-l border-[#e5e5e5]"></td>
    </tr>
);

const GroupRow = ({ title }) => (
    <tr className="h-[38px] [&>td]:border-l [&>td]:border-[#e5e5e5] [&>td]:p-0">
        <td className="whitespace-nowrap !border-l-0 font-['Open_Sans',sans-serif] text-[15px]"><span className="block pl-4 pt-[5px]">{title}</span></td>
        <td></td><td></td><td></td><td></td><td></td><td></td>
    </tr>
);

const TaskManager = () => (
    <section className="absolute left-[111px] top-[124px] flex h-[583px] w-[766px] flex-col overflow-hidden rounded-[8px] border border-[#b5b5b5] bg-[#f2f2f2] text-[#1a1a1a] shadow-[0_16px_36px_rgba(0,0,0,0.45)]">
        <header className="flex h-[51px] shrink-0 items-start">
            <div className="flex w-[237px] shrink-0 items-center gap-[23px] pl-[17px] pt-[13px]">
                <TaskLogo />
                <h1 className="leading-[26px] text-[#666]">Task Manager</h1>
            </div>
            <label className="mt-[9px] flex h-[32px] w-[258px] items-center gap-5 rounded-[5px] border border-b-[#c8c8c8] border-[#e3e3e3] bg-[#fbfbfb] pl-[14px]">
                <Svg w={12} h={12} color="#777"><circle cx="5" cy="5" r="4" /><path d="M8 8l3.500 3.500" /></Svg>
                <input
                    aria-label="Search processes"
                    placeholder="Type a name, publisher, or PID..."
                    className="w-[210px] bg-transparent font-['Open_Sans',sans-serif] text-[13px] placeholder:text-[#6b6b6b]"
                />
            </label>
            <div className="ml-auto"><WindowButtons color="#8b8b8b" /></div>
        </header>
        <div className="flex min-h-0 flex-1">
            <aside className="flex w-[49px] shrink-0 flex-col items-center pr-[2px] pt-1">
                {sideIcons.map(([label, icon], i) => (
                    <button
                        key={label}
                        aria-label={label}
                        className={i === 1
                            ? 'my-[2px] flex h-9 w-10 shrink-0 items-center gap-[9px] rounded-[5px] bg-[#eaeaea]'
                            : 'flex h-10 w-10 shrink-0 items-center justify-center'}
                    >
                        {i === 1 && <span className="h-4 w-[3px] rounded-full bg-[#8b35ab]" />}
                        <Svg w={16} h={16} color="#222">{icon}</Svg>
                    </button>
                ))}
                <button aria-label="Settings" className="mb-[4px] mt-auto flex h-10 w-10 items-center justify-center">
                    <Svg w={16} h={16} color="#333">
                        <circle cx="8" cy="8" r="2.500" />
                        <path d="M6.500 1h3l.5 2 1.500 1 2-.5 1.500 2.500-1.500 1.500v1l1.500 1.500-1.500 2.500-2-.5-1.500 1-.5 2h-3L6 13l-1.500-1-2 .5L1 10l1.500-1.500v-1L1 6l1.500-2.500 2 .5L6 3z" />
                    </Svg>
                </button>
            </aside>
            <div className="flex min-w-0 flex-1 flex-col overflow-hidden rounded-tl-[8px] border-l border-t border-[#e6e6e6] bg-white">
                <div className="flex h-[51px] shrink-0 items-center border-b-2 border-[#efefef] pl-[15px]">
                    <h2 className="w-[311px] font-['Open_Sans',sans-serif] text-[13px] font-semibold">Processes</h2>
                    <button className="flex w-[109px] items-center gap-2">
                        <Svg w={16} h={16} color="#111">
                            <path d="M6 14H2.500A1.500 1.500 0 0 1 1 12.500v-10A1.500 1.500 0 0 1 2.500 1h9A1.500 1.500 0 0 1 13 2.500V6M1 7.500h8M7 1v9" />
                            <circle cx="11" cy="11.500" r="4.500" fill="#111" stroke="none" />
                            <path d="M11 9v5M8.500 11.500h5" stroke="#fff" />
                        </Svg>
                        <span className="whitespace-nowrap">Run new task</span>
                    </button>
                    <span className="h-8 w-px bg-[#e8e8e8]" />
                    <button disabled className="ml-[14px] flex w-[94px] items-center gap-2 text-[#a3a3a3]">
                        <Svg w={16} h={16} color="#a3a3a3"><circle cx="8" cy="8" r="7" /><path d="M3 13L13 3" /></Svg>
                        End task
                    </button>
                    <button disabled className="flex w-[136px] items-center gap-2 text-[#a3a3a3]">
                        <Svg w={17} h={14} color="#a3a3a3">
                            <path d="M6 11Q1 9 1 2q3 1 5-1 2 2 4 1M4 4l3 3 2-3M6 13l4-4M8 11Q6 6 10 4q3 1 6-1 1 9-4 9-2 0-4-1z" />
                        </Svg>
                        <span className="whitespace-nowrap">Efficiency mode</span>
                    </button>
                    <button aria-label="More options" className="flex">
                        <Svg w={17} h={4}><circle cx="2" cy="2" r="1.500" fill="#111" /><circle cx="8.500" cy="2" r="1.500" fill="#111" /><circle cx="15" cy="2" r="1.500" fill="#111" /></Svg>
                    </button>
                </div>
                <div className="flex min-h-0 flex-1 overflow-hidden">
                    <table className="min-w-0 flex-1 table-fixed border-separate border-spacing-0 self-start text-black">
                        <colgroup>
                            <col className="w-[274px]" />
                            <col className="w-[120px]" />
                            <col className="w-[73px]" />
                            <col className="w-[73px]" />
                            <col className="w-[73px]" />
                            <col className="w-[73px]" />
                            <col />
                        </colgroup>
                        <thead>
                            <tr className="h-[49px] text-[#666] [&>th]:border-b [&>th]:border-l [&>th]:border-[#e5e5e5] [&>th]:p-0 [&>th]:align-bottom [&>th]:font-normal">
                                <th className="!border-l-0 text-left">
                                    <span className="flex flex-col pb-[2px] pl-[15px]">
                                        <span className="flex h-[22px] justify-center pr-[26px]">
                                            <Svg w={10} h={6} color="#777"><path d="M1 5l4-4 4 4" /></Svg>
                                        </span>
                                        <span className="leading-[18px]">Name</span>
                                    </span>
                                </th>
                                <th className="text-left"><span className="block pb-[2px] pl-[6px] leading-[18px]">Status</span></th>
                                {[['23%', 'CPU'], ['38%', 'Memory'], ['1%', 'Disk'], ['14%', 'Network']].map(([total, name]) => (
                                    <th key={name} className="text-right">
                                        <span className="block pr-[6px] font-['Open_Sans',sans-serif] text-[15px] leading-6 text-black">{total}</span>
                                        <span className="block pb-[2px] pr-[6px] leading-[18px]">{name}</span>
                                    </th>
                                ))}
                                <th></th>
                            </tr>
                        </thead>
                        <tbody>
                            <GroupRow title="Apps (3)" />
                            {apps.map((row, i) => <ProcessRow key={i} row={row} />)}
                            <GroupRow title="Background processes (87)" />
                            {background.map((row) => <ProcessRow key={row.name} row={row} />)}
                        </tbody>
                    </table>
                    <div className="mt-[49px] flex w-4 shrink-0 justify-center bg-[#f0f0f0] pt-4">
                        <div className="h-[31px] w-0.5 bg-[#8a8a8a]" />
                    </div>
                </div>
            </div>
        </div>
    </section>
);

const App = () => {
    return (
        <div className="relative flex h-screen gap-[2px] overflow-hidden bg-gradient-to-b from-[#8ea9d8] to-[#2b3556] p-px font-['Noto_Sans','Open_Sans',sans-serif] text-[11px] text-black">
            <Terminal data={leftTerminal} />
            <TaskManager />
            <Terminal data={rightTerminal} />
        </div>
    );
};

export default App;
